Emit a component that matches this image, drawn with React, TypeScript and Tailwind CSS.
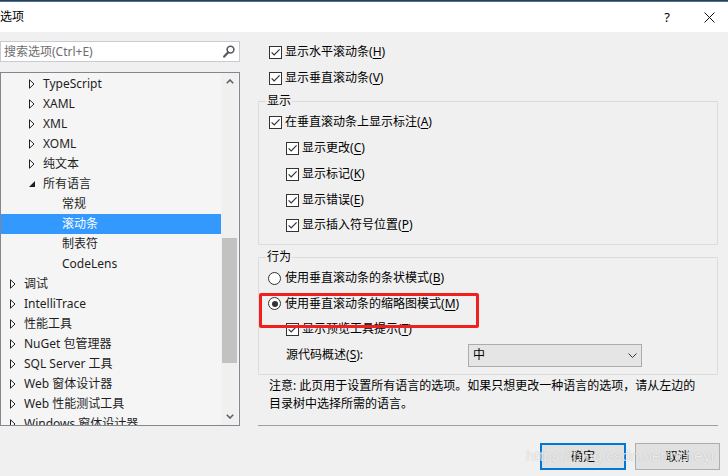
import React from "react";

type Node = { label: string; level: number; arrow?: "closed" | "open"; selected?: boolean };

const tree: Node[] = [
  { label: "TypeScript", level: 2, arrow: "closed" },
  { label: "XAML", level: 2, arrow: "closed" },
  { label: "XML", level: 2, arrow: "closed" },
  { label: "XOML", level: 2, arrow: "closed" },
  { label: "纯文本", level: 2, arrow: "closed" },
  { label: "所有语言", level: 2, arrow: "open" },
  { label: "常规", level: 3 },
  { label: "滚动条", level: 3, selected: true },
  { label: "制表符", level: 3 },
  { label: "CodeLens", level: 3 },
  { label: "调试", level: 1, arrow: "closed" },
  { label: "IntelliTrace", level: 1, arrow: "closed" },
  { label: "性能工具", level: 1, arrow: "closed" },
  { label: "NuGet 包管理器", level: 1, arrow: "closed" },
  { label: "SQL Server 工具", level: 1, arrow: "closed" },
  { label: "Web 窗体设计器", level: 1, arrow: "closed" },
  { label: "Web 性能测试工具", level: 1, arrow: "closed" },
  { label: "Windows 窗体设计器", level: 1, arrow: "closed" },
];

const indent: Record<number, string> = { 1: "pl-[9px]", 2: "pl-[28px]", 3: "pl-[47px]" };

function Arrow({ kind }: { kind?: "closed" | "open" }) {
  if (kind === "closed")
    return (
      <svg width="6" height="10" viewBox="0 0 6 10" className="shrink-0">
        <path d="M0.5 0.8 L5 5 L0.5 9.2 Z" fill="#fff" stroke="#1e1e1e" strokeWidth="1" />
      </svg>
    );
  if (kind === "open")
    return (
      <svg width="6" height="10" viewBox="0 0 6 10" className="shrink-0">
        <path d="M6 2 L6 8 L0 8 Z" fill="#1e1e1e" />
      </svg>
    );
  return <span className="w-[6px] shrink-0" />;
}

function Check({ on = true }: { on?: boolean }) {
  return (
    <span className="flex h-[13px] w-[13px] shrink-0 items-center justify-center border border-[#333] bg-white">
      {on ? (
        <svg width="11" height="11" viewBox="0 0 11 11">
          <path d="M1.6 5.4 L4.2 8 L9.6 2.4" fill="none" stroke="#333" strokeWidth="1.2" />
        </svg>
      ) : null}
    </span>
  );
}

function Radio({ on = false }: { on?: boolean }) {
  return (
    <span className="flex h-[13px] w-[13px] shrink-0 items-center justify-center rounded-full border border-[#333] bg-white">
      {on ? <span className="h-[6px] w-[6px] rounded-full bg-[#333]" /> : null}
    </span>
  );
}

function Key({ text, k }: { text: string; k: string }) {
  return (
    <span>
      {text}(<span className="underline underline-offset-2">{k}</span>)
    </span>
  );
}

function CheckRow({ text, k, sub = false }: { text: string; k: string; sub?: boolean }) {
  return (
    <div className={`flex h-[26px] items-center gap-[3px] ${sub ? "pl-[17px]" : ""}`}>
      <Check />
      <Key text={text} k={k} />
    </div>
  );
}

export default function App() {
  return (
    <div className="relative h-[476px] w-[728px] overflow-hidden bg-[#f0f0f0] font-['Noto_Sans','Noto_Sans_CJK_SC',sans-serif] text-[12px] leading-[16px] text-black">
      <div className="h-px bg-[#3b3b3b]" />
      <div className="h-px bg-[#3a78b4]" />
      <div className="flex h-[30px] items-center bg-white">
        <span className="text-[12px]">选项</span>
        <span className="ml-auto mr-[34px] text-[13px]">?</span>
        <svg width="11" height="11" viewBox="0 0 11 11" className="mr-[13px]">
          <path d="M0.5 0.5 L10.5 10.5 M10.5 0.5 L0.5 10.5" stroke="#111" strokeWidth="1" />
        </svg>
      </div>

      <div className="flex">
        <div className="w-[240px] pt-[9px]">
          <div className="flex h-[21px] items-center border border-[#c9cad3] bg-white pl-[3px] pr-[4px]">
            <span className="text-[#6d6d6d]">搜索选项(Ctrl+E)</span>
            <svg width="12" height="13" viewBox="0 0 12 13" className="ml-auto">
              <circle cx="7.5" cy="4.6" r="3.4" fill="none" stroke="#5a5a5a" strokeWidth="1.6" />
              <path d="M5.2 7.2 L1.2 11.6" stroke="#5a5a5a" strokeWidth="2.2" strokeLinecap="round" />
            </svg>
          </div>

          <div className="mt-[10px] flex h-[354px] border border-[#828790] bg-[#f5f5f5]">
            <div className="w-[220px] overflow-hidden pt-px">
              {tree.map((n) => (
                <div
                  key={n.label}
                  className={`flex h-[20px] items-center gap-[8px] ${indent[n.level]} ${
                    n.selected ? "bg-[#3399ff] text-white" : "text-[#1e1e1e]"
                  }`}
                >
                  <Arrow kind={n.arrow} />
                  <span className="whitespace-nowrap">{n.label}</span>
                </div>
              ))}
            </div>
            <div className="flex w-[17px] flex-col bg-[#f0f0f0]">
              <div className="flex h-[17px] items-center justify-center">
                <svg width="8" height="5" viewBox="0 0 8 5">
                  <path d="M0.8 4.2 L4 1 L7.2 4.2" fill="none" stroke="#606060" strokeWidth="1.6" />
                </svg>
              </div>
              <div className="flex-1">
                <div className="mx-[1px] mt-[148px] h-[125px] bg-[#c2c2c2]" />
              </div>
              <div className="flex h-[17px] items-center justify-center">
                <svg width="8" height="5" viewBox="0 0 8 5">
                  <path d="M0.8 0.8 L4 4 L7.2 0.8" fill="none" stroke="#606060" strokeWidth="1.6" />
                </svg>
              </div>
            </div>
          </div>
        </div>

        <div className="ml-[18px] w-[462px] pt-[7px]">
          <div className="pl-[11px]">
            <CheckRow text="显示水平滚动条" k="H" />
            <CheckRow text="显示垂直滚动条" k="V" />
          </div>

          <fieldset className="mt-[2px] w-[460px] border border-[#dcdcdc]">
            <legend className="ml-[7px] px-[1px]">显示</legend>
            <div className="pb-[6px] pl-[10px]">
              <CheckRow text="在垂直滚动条上显示标注" k="A" />
              <CheckRow text="显示更改" k="C" sub />
              <CheckRow text="显示标记" k="K" sub />
              <CheckRow text="显示错误" k="E" sub />
              <div className="-mt-px">
                <CheckRow text="显示插入符号位置" k="P" sub />
              </div>
            </div>
          </fieldset>

          <fieldset className="mt-[4px] w-[460px] border border-[#dcdcdc]">
            <legend className="ml-[7px] px-[1px]">行为</legend>
            <div className="relative pb-[6px] pl-[9px]">
              <div className="flex h-[26px] items-center gap-[4px]">
                <Radio />
                <Key text="使用垂直滚动条的条状模式" k="B" />
              </div>
              <div className="flex h-[25px] items-center gap-[4px]">
                <Radio on />
                <Key text="使用垂直滚动条的缩略图模式" k="M" />
              </div>
              <div className="pl-[1px]">
                <CheckRow text="显示预览工具提示" k="T" sub />
              </div>
              <div className="flex h-[26px] items-center pl-[18px]">
                <span className="w-[182px]">
                  <Key text="源代码概述" k="S" />:
                </span>
                <div className="flex h-[23px] w-[174px] items-center border border-[#acacac] bg-[#e5e5e5] pl-[4px] pr-[4px]">
                  <span>中</span>
                  <svg width="9" height="5" viewBox="0 0 9 5" className="ml-auto">
                    <path d="M0.5 0.5 L4.5 4.5 L8.5 0.5" fill="none" stroke="#333" strokeWidth="1" />
                  </svg>
                </div>
              </div>
              <div className="pointer-events-none absolute left-0 top-[28px] h-[35px] w-[220px] rounded-[2px] border-[3px] border-[#f0201f]" />
            </div>
          </fieldset>

          <div className="mt-[2px] pl-[11px] leading-[18px]">
            <p>注意: 此页用于设置所有语言的选项。如果只想更改一种语言的选项，请从左边的</p>
            <p>目录树中选择所需的语言。</p>
          </div>

          <div className="mt-[12px] h-px w-[460px] bg-[#a0a0a0]" />

          <div className="mt-[17px] flex justify-end gap-[9px]">
            <button className="h-[27px] w-[86px] border-2 border-[#0078d7] bg-[#e1e1e1]">确定</button>
            <button className="h-[27px] w-[85px] border border-[#adadad] bg-[#e1e1e1]">取消</button>
          </div>
        </div>
      </div>

      <div className="pointer-events-none absolute left-[526px] top-[446px] font-['Liberation_Sans',sans-serif] text-[15.5px] leading-[20px] text-white/75 [text-shadow:0_0_1px_rgba(0,0,0,0.25)]">
        https://blog.csdn.net/hcheyr
      </div>
    </div>
  );
}
